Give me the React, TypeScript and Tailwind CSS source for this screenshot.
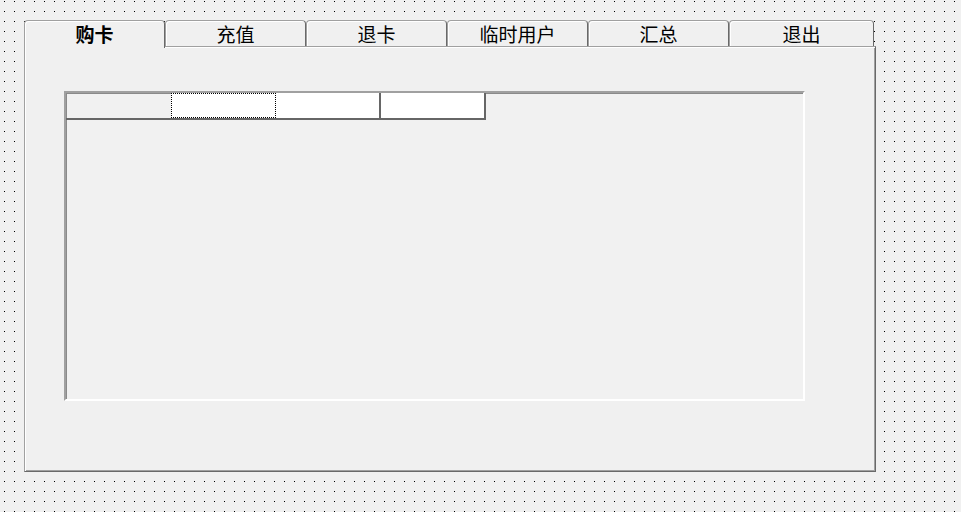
const tabs = ["购卡", "充值", "退卡", "临时用户", "汇总", "退出"];

function Tab({ label, selected, last }: { label: string; selected: boolean; last: boolean }) {
  if (selected) {
    return (
      <div className="relative z-10 flex h-[28px] w-[141px] shrink-0 items-center justify-center rounded-t-[4px] border-l border-r border-t border-l-[#a0a0a0] border-r-[#696969] border-t-[#a0a0a0] bg-[#f0f0f0] pb-[3px] text-[19px] font-bold leading-none text-black shadow-[inset_1px_1px_0_#fff]">
        {label}
      </div>
    );
  }
  return (
    <div
      className={`flex h-[26px] shrink-0 items-center justify-center rounded-t-[4px] border-l border-r border-t border-l-[#a0a0a0] border-r-[#696969] border-t-[#a0a0a0] bg-[#f0f0f0] text-[19px] leading-none text-black shadow-[inset_1px_1px_0_#fff] ${
        last ? "w-[145px]" : "w-[141px]"
      }`}
    >
      {label}
    </div>
  );
}

export default function App() {
  return (
    <div className="h-[512px] w-[961px] overflow-hidden bg-[#f0f0f0] bg-[image:conic-gradient(from_270deg_at_1px_1px,#000_25%,transparent_0)] bg-[size:10px_10px] bg-[position:4px_1px] pl-[24px] pt-[20px] font-['Noto_Sans_CJK_SC',sans-serif]">
      <div className="w-[852px]">
        {/* tab strip */}
        <div className="flex h-[26px] items-start">
          {tabs.map((t, i) => (
            <Tab key={t} label={t} selected={i === 0} last={i === tabs.length - 1} />
          ))}
        </div>

        {/* tab page */}
        <div className="h-[426px] w-[852px] border border-b-[#696969] border-l-[#a0a0a0] border-r-[#696969] border-t-[#a0a0a0] bg-[#f0f0f0] pl-[39px] pt-[44px] shadow-[inset_1px_1px_0_#fff,inset_-1px_-1px_0_#a0a0a0]">
          {/* data grid */}
          <div className="h-[310px] w-[741px] border-2 border-b-white border-l-[#a0a0a0] border-r-white border-t-[#a0a0a0] bg-[#f1f1f1] shadow-[inset_1px_1px_0_#8a8a8a]">
            <div className="flex h-[27px]">
              <div className="h-[27px] w-[105px] border-b-2 border-[#666]" />
              <div className="h-[27px] w-[106px] border-b-2 border-[#666] bg-white">
                <div className="h-[25px] w-[105px] border border-dotted border-black" />
              </div>
              <div className="h-[27px] w-[104px] border-b-2 border-r-2 border-[#666] bg-white" />
              <div className="h-[27px] w-[105px] border-b-2 border-r-2 border-[#666] bg-white" />
            </div>
          </div>
        </div>
      </div>
    </div>
  );
}
